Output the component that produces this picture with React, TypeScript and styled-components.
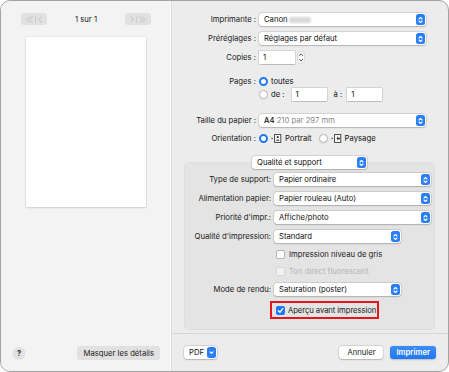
import React from 'react';
import styled, { createGlobalStyle } from 'styled-components';

const GlobalStyle = createGlobalStyle`
  html, body {
    margin: 0;
    padding: 0;
    background: #ffffff;
  }
  body {
    font-family: Inter, "Liberation Sans", sans-serif;
    font-size: 7.7px;
    color: #111;
  }
`;

const Window = styled.div`
  width: 449px;
  height: 372px;
  box-sizing: border-box;
  border: 1px solid #a3a3a3;
  border-radius: 10px;
  overflow: hidden;
  display: grid;
  grid-template-columns: 171px 1fr;
  background: #ececec;
`;

/* ---------- left side ---------- */

const Sidebar = styled.div`
  background: #f3f3f3;
  border-right: 1px solid #dcdcdc;
  box-shadow: inset -1px 0 0 #fafafa;
  display: flex;
  flex-direction: column;
  align-items: center;
`;

const Pager = styled.div`
  margin-top: 12px;
  width: 130px;
  display: flex;
  align-items: center;
  justify-content: space-between;
`;

const NavButton = styled.div`
  width: 26px;
  height: 12px;
  border-radius: 3px;
  background: #e1e1e1;
  display: flex;
  align-items: center;
  justify-content: center;
  gap: 2px;
  color: #bdbdbd;
  svg {
    display: block;
  }
`;

const PageCount = styled.span`
  color: #222;
`;

const Sheet = styled.div`
  margin-top: 12px;
  width: 120px;
  height: 170px;
  background: #ffffff;
  box-shadow: 0 0 0 0.5px rgba(0, 0, 0, 0.08), 0 1px 2px rgba(0, 0, 0, 0.12);
`;

const SideFooter = styled.div`
  margin-top: auto;
  margin-bottom: 11px;
  width: 100%;
  box-sizing: border-box;
  padding: 0 11px 0 12px;
  display: flex;
  align-items: center;
  justify-content: space-between;
`;

const HelpButton = styled.div`
  width: 12px;
  height: 12px;
  border-radius: 50%;
  background: #e2e2e2;
  box-shadow: 0 0.5px 1px rgba(0, 0, 0, 0.15);
  display: flex;
  align-items: center;
  justify-content: center;
  font-weight: 700;
  font-size: 7.5px;
  color: #333;
`;

const GrayButton = styled.div`
  height: 14px;
  padding: 0 6px;
  border-radius: 3px;
  background: #e1e1e1;
  display: flex;
  align-items: center;
  color: #222;
`;

/* ---------- right side ---------- */

const Main = styled.div`
  display: flex;
  flex-direction: column;
  min-width: 0;
`;

const Form = styled.div`
  padding: 12px 22px 0 0;
  display: flex;
  flex-direction: column;
`;

const Row = styled.div<{ $top?: number; $label?: number }>`
  margin-top: ${p => p.$top ?? 0}px;
  display: grid;
  grid-template-columns: ${p => p.$label ?? 84}px 1fr;
  column-gap: 3px;
  align-items: center;
  min-height: 13px;
`;

const Label = styled.div`
  text-align: right;
  white-space: nowrap;
  color: #1a1a1a;
`;

const Popup = styled.div<{ $width?: number }>`
  height: 13px;
  width: ${p => (p.$width ? `${p.$width}px` : 'auto')};
  box-sizing: border-box;
  background: #ffffff;
  border-radius: 3px;
  box-shadow: 0 0 0 0.5px rgba(0, 0, 0, 0.14), 0 0.5px 1.5px rgba(0, 0, 0, 0.18);
  display: flex;
  align-items: center;
  padding: 0 1px 0 5px;
  white-space: nowrap;
`;

const PopupText = styled.span`
  flex: 1;
  overflow: hidden;
`;

const Strong = styled.span`
  font-weight: 500;
`;

const Muted = styled.span`
  color: #8a8a8a;
`;

const Blur = styled.span`
  display: inline-block;
  width: 22px;
  height: 6px;
  margin-left: 1px;
  vertical-align: middle;
  background: #d9d9d9;
  border-radius: 2px;
  filter: blur(1px);
`;

const StepperIcon = styled.div`
  width: 9px;
  height: 11px;
  border-radius: 2.5px;
  background: #2a7ff5;
  display: flex;
  align-items: center;
  justify-content: center;
  flex-shrink: 0;
`;

const Inline = styled.div<{ $gap?: number; $indent?: number }>`
  display: flex;
  align-items: center;
  gap: ${p => p.$gap ?? 4}px;
  padding-left: ${p => p.$indent ?? 0}px;
  white-space: nowrap;
`;

const TextField = styled.div<{ $width: number; $left?: number }>`
  width: ${p => p.$width}px;
  height: 13px;
  margin-left: ${p => p.$left ?? 0}px;
  box-sizing: border-box;
  background: #ffffff;
  box-shadow: 0 0 0 0.5px rgba(0, 0, 0, 0.2), 0 0.5px 1px rgba(0, 0, 0, 0.12);
  display: flex;
  align-items: center;
  padding-left: 4px;
`;

const Gap = styled.span<{ $left: number }>`
  margin-left: ${p => p.$left}px;
`;

const Radio = styled.span<{ $on?: boolean; $left?: number }>`
  width: 9px;
  height: 9px;
  margin-left: ${p => p.$left ?? 0}px;
  border-radius: 50%;
  box-sizing: border-box;
  flex-shrink: 0;
  background: #ffffff;
  border: ${p => (p.$on ? '2.8px solid #1e78f2' : '0.5px solid #b9b9b9')};
  box-shadow: ${p => (p.$on ? 'none' : '0 0.5px 1px rgba(0,0,0,0.12)')};
`;

const Check = styled.span<{ $on?: boolean; $off?: boolean }>`
  width: 9px;
  height: 9px;
  border-radius: 2px;
  box-sizing: border-box;
  flex-shrink: 0;
  display: flex;
  align-items: center;
  justify-content: center;
  background: ${p => (p.$on ? '#1e78f2' : p.$off ? '#f2f2f2' : '#ffffff')};
  border: ${p => (p.$on ? 'none' : p.$off ? '0.5px solid #d6d6d6' : '0.5px solid #b3b3b3')};
`;

const Option = styled.span<{ $off?: boolean }>`
  color: ${p => (p.$off ? '#b5b5b5' : '#1a1a1a')};
`;

const Panel = styled.div`
  margin: 17px 13px 0 12px;
  height: 168px;
  background: #e4e4e4;
  border-radius: 5px;
  box-shadow: inset 0 0 0 0.5px rgba(0, 0, 0, 0.05);
  display: flex;
  flex-direction: column;
  padding-right: 4px;
`;

const PanelSelect = styled.div`
  margin-top: -6px;
  align-self: center;
  margin-left: 4px;
`;

const Highlight = styled.div`
  margin-left: -4px;
  width: 109px;
  height: 18px;
  box-sizing: border-box;
  border: 2px solid #e8141b;
  display: flex;
  align-items: center;
  padding-left: 4px;
  gap: 3px;
  white-space: nowrap;
  letter-spacing: -0.08px;
`;

const Footer = styled.div`
  margin-top: auto;
  height: 37px;
  border-top: 1px solid #d7d7d7;
  display: flex;
  align-items: center;
  padding: 0 12px 0 12px;
  gap: 7px;
`;

const PdfButton = styled.div`
  height: 13px;
  background: #ffffff;
  border-radius: 3px;
  box-shadow: 0 0 0 0.5px rgba(0, 0, 0, 0.14), 0 0.5px 1.5px rgba(0, 0, 0, 0.18);
  display: flex;
  align-items: center;
  gap: 3px;
  padding: 0 1px 0 5px;
`;

const PushButton = styled.div<{ $primary?: boolean }>`
  height: 13px;
  min-width: 44px;
  box-sizing: border-box;
  padding: 0 6px;
  border-radius: 3px;
  display: flex;
  align-items: center;
  justify-content: center;
  background: ${p => (p.$primary ? 'linear-gradient(#3b8cf7, #1f77f1)' : '#ffffff')};
  color: ${p => (p.$primary ? '#ffffff' : '#222')};
  font-weight: ${p => (p.$primary ? 600 : 400)};
  box-shadow: ${p =>
    p.$primary
      ? '0 0.5px 1.5px rgba(0,0,0,0.2)'
      : '0 0 0 0.5px rgba(0,0,0,0.14), 0 0.5px 1.5px rgba(0,0,0,0.18)'};
`;

const Spacer = styled.div`
  flex: 1;
`;

/* ---------- icons ---------- */

const UpDown = () => (
  <StepperIcon>
    <svg width="5" height="8" viewBox="0 0 5 8" fill="none" stroke="#fff" strokeWidth="1.1" strokeLinecap="round" strokeLinejoin="round">
      <path d="M1 3 L2.5 1.5 L4 3" />
      <path d="M1 5 L2.5 6.5 L4 5" />
    </svg>
  </StepperIcon>
);

const DownOnly = () => (
  <StepperIcon>
    <svg width="5" height="5" viewBox="0 0 5 5" fill="none" stroke="#fff" strokeWidth="1.1" strokeLinecap="round" strokeLinejoin="round">
      <path d="M1 1.8 L2.5 3.3 L4 1.8" />
    </svg>
  </StepperIcon>
);

const Spinner = () => (
  <svg width="8" height="13" viewBox="0 0 8 13" fill="none">
    <rect x="0.5" y="0.5" width="7" height="12" rx="3" fill="#f7f7f7" stroke="#c4c4c4" strokeWidth="0.5" />
    <path d="M2.3 4.6 L4 2.9 L5.7 4.6" stroke="#444" strokeWidth="0.9" strokeLinecap="round" strokeLinejoin="round" />
    <path d="M2.3 8.4 L4 10.1 L5.7 8.4" stroke="#444" strokeWidth="0.9" strokeLinecap="round" strokeLinejoin="round" />
  </svg>
);

const Chevrons = ({ dir, double }: { dir: 'l' | 'r'; double?: boolean }) => (
  <svg width={double ? 7 : 4} height="7" viewBox={double ? '0 0 7 7' : '0 0 4 7'} fill="none" stroke="currentColor" strokeWidth="0.9" strokeLinecap="round" strokeLinejoin="round">
    {dir === 'l' ? (
      double ? (
        <>
          <path d="M3.5 0.8 L0.8 3.5 L3.5 6.2" />
          <path d="M6.3 0.8 L3.6 3.5 L6.3 6.2" />
        </>
      ) : (
        <path d="M3.2 0.8 L0.8 3.5 L3.2 6.2" />
      )
    ) : double ? (
      <>
        <path d="M0.7 0.8 L3.4 3.5 L0.7 6.2" />
        <path d="M3.5 0.8 L6.2 3.5 L3.5 6.2" />
      </>
    ) : (
      <path d="M0.8 0.8 L3.2 3.5 L0.8 6.2" />
    )}
  </svg>
);

const Bar = styled.span`
  width: 0.8px;
  height: 7px;
  background: #cdcdcd;
`;

const OrientIcon = ({ landscape }: { landscape?: boolean }) => (
  <svg width="11" height="9" viewBox="0 0 11 9" fill="none">
    <path d="M0.6 3.4 L2.2 4.5 L0.6 5.6 Z" fill="#333" />
    <rect x="3.6" y="0.6" width="6.2" height="7.8" fill="#fff" stroke="#333" strokeWidth="0.9" />
    {landscape ? (
      <>
        <circle cx="7.9" cy="4.5" r="1.1" fill="#333" />
        <path d="M6.8 2.3 Q4.6 4.5 6.8 6.7 Z" fill="#333" />
      </>
    ) : (
      <>
        <circle cx="6.7" cy="3" r="1.1" fill="#333" />
        <path d="M4.7 6.8 Q6.7 4.1 8.7 6.8 Z" fill="#333" />
      </>
    )}
  </svg>
);

const Tick = () => (
  <svg width="7" height="7" viewBox="0 0 7 7" fill="none" stroke="#fff" strokeWidth="1.3" strokeLinecap="round" strokeLinejoin="round">
    <path d="M1.3 3.7 L2.9 5.3 L5.8 1.6" />
  </svg>
);

const App = () => {
  return (
    <>
      <GlobalStyle />
      <Window>
        <Sidebar>
          <Pager>
            <NavButton>
              <Chevrons dir="l" double />
              <Bar />
              <Chevrons dir="l" />
            </NavButton>
            <PageCount>1 sur 1</PageCount>
            <NavButton>
              <Chevrons dir="r" />
              <Bar />
              <Chevrons dir="r" double />
            </NavButton>
          </Pager>
          <Sheet />
          <SideFooter>
            <HelpButton>?</HelpButton>
            <GrayButton>Masquer les détails</GrayButton>
          </SideFooter>
        </Sidebar>

        <Main>
          <Form>
            <Row>
              <Label>Imprimante :</Label>
              <Popup>
                <PopupText>
                  Canon<Blur />
                </PopupText>
                <UpDown />
              </Popup>
            </Row>
            <Row $top={6}>
              <Label>Préréglages :</Label>
              <Popup>
                <PopupText>Réglages par défaut</PopupText>
                <UpDown />
              </Popup>
            </Row>
            <Row $top={6}>
              <Label>Copies :</Label>
              <Inline $gap={2}>
                <TextField $width={36}>1</TextField>
                <Spinner />
              </Inline>
            </Row>
            <Row $top={11}>
              <Label>Pages :</Label>
              <Inline $gap={3}>
                <Radio $on />
                <span>toutes</span>
              </Inline>
            </Row>
            <Row>
              <span />
              <Inline $gap={3}>
                <Radio />
                <span>de :</span>
                <TextField $width={35} $left={4}>1</TextField>
                <Gap $left={4}>à :</Gap>
                <TextField $width={35} $left={2}>1</TextField>
              </Inline>
            </Row>
            <Row $top={13}>
              <Label>Taille du papier :</Label>
              <Popup>
                <PopupText>
                  <Strong>A4</Strong> <Muted>210 par 297 mm</Muted>
                </PopupText>
                <UpDown />
              </Popup>
            </Row>
            <Row $top={5}>
              <Label>Orientation :</Label>
              <Inline $gap={3}>
                <Radio $on />
                <OrientIcon />
                <span>Portrait</span>
                <Radio $left={4} />
                <OrientIcon landscape />
                <span>Paysage</span>
              </Inline>
            </Row>
          </Form>

          <Panel>
            <PanelSelect>
              <Popup $width={115}>
                <PopupText>Qualité et support</PopupText>
                <UpDown />
              </Popup>
            </PanelSelect>
            <Row $top={4} $label={87}>
              <Label>Type de support:</Label>
              <Popup>
                <PopupText>Papier ordinaire</PopupText>
                <UpDown />
              </Popup>
            </Row>
            <Row $top={6} $label={87}>
              <Label>Alimentation papier:</Label>
              <Popup>
                <PopupText>Papier rouleau (Auto)</PopupText>
                <UpDown />
              </Popup>
            </Row>
            <Row $top={6} $label={87}>
              <Label>Priorité d'impr.:</Label>
              <Popup>
                <PopupText>Affiche/photo</PopupText>
                <UpDown />
              </Popup>
            </Row>
            <Row $top={6} $label={87}>
              <Label>Qualité d'impression:</Label>
              <Popup $width={127}>
                <PopupText>Standard</PopupText>
                <UpDown />
              </Popup>
            </Row>
            <Row $top={5} $label={87}>
              <span />
              <Inline $gap={4} $indent={2}>
                <Check />
                <Option>Impression niveau de gris</Option>
              </Inline>
            </Row>
            <Row $top={4} $label={87}>
              <span />
              <Inline $gap={4} $indent={2}>
                <Check $off />
                <Option $off>Ton direct fluorescent</Option>
              </Inline>
            </Row>
            <Row $top={5} $label={87}>
              <Label>Mode de rendu:</Label>
              <Popup $width={127}>
                <PopupText>Saturation (poster)</PopupText>
                <UpDown />
              </Popup>
            </Row>
            <Row $top={5} $label={87}>
              <span />
              <Highlight>
                <Check $on>
                  <Tick />
                </Check>
                <Option>Aperçu avant impression</Option>
              </Highlight>
            </Row>
          </Panel>

          <Footer>
            <PdfButton>
              PDF
              <DownOnly />
            </PdfButton>
            <Spacer />
            <PushButton>Annuler</PushButton>
            <PushButton $primary>Imprimer</PushButton>
          </Footer>
        </Main>
      </Window>
    </>
  );
};

export default App;
